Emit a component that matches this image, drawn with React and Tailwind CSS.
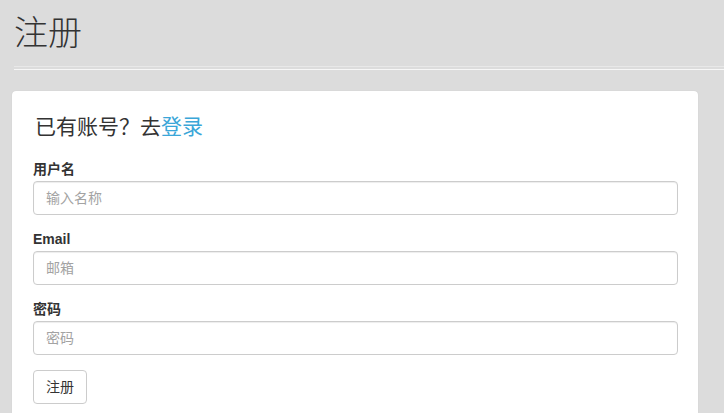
import React from "react";

const sans = { fontFamily: '"Helvetica Neue", "Liberation Sans", "Noto Sans CJK SC", sans-serif' };

function Field({ label, placeholder, type = "text" }) {
  return (
    <div className="flex flex-col">
      <label className="block h-5 leading-5 mb-[2px] text-[14px] font-bold text-[#333]">{label}</label>
      <input
        type={type}
        placeholder={placeholder}
        className="h-[34px] w-full rounded-[4px] border border-[#ccc] bg-white px-3 text-[14px] text-[#555] placeholder:text-[#a3a3a3] outline-none shadow-[inset_0_1px_1px_rgba(0,0,0,0.075)]"
      />
    </div>
  );
}

export default function App() {
  return (
    <div className="min-h-[413px] w-full bg-[#dcdcdc] overflow-hidden" style={sans}>
      <div className="pl-[14px] pt-[15px]">
        <h1
          className="text-[34px] leading-[38px] text-[#333] font-normal"
          style={{ fontFamily: '"Liberation Serif", "Noto Sans CJK SC", serif', fontWeight: 300 }}
        >
          注册
        </h1>
        <div className="mt-[13px] h-[4px] border-t border-t-[#e8e8e8] border-b border-b-[#f7f7f7]" />
      </div>
      <div className="ml-[12px] mt-[21px] w-[686px] rounded-[4px] bg-white px-[21px] pt-[21px] pb-[20px] shadow-[0_0_1px_rgba(0,0,0,0.15)]">
        <p className="pl-[2px] text-[21px] leading-[30px] text-[#333]">
          已有账号？去<a className="text-[#3aa6d8]" href="#">登录</a>
        </p>
        <form className="mt-[17px] mr-[-1px] flex flex-col gap-[14px]" onSubmit={(e) => e.preventDefault()}>
          <Field label="用户名" placeholder="输入名称" />
          <Field label="Email" placeholder="邮箱" type="email" />
          <Field label="密码" placeholder="密码" type="password" />
          <div className="pt-px">
            <button
              type="submit"
              className="h-[34px] w-[54px] rounded-[4px] border border-[#ccc] bg-white text-[14px] text-[#333]"
            >
              注册
            </button>
          </div>
        </form>
      </div>
    </div>
  );
}
